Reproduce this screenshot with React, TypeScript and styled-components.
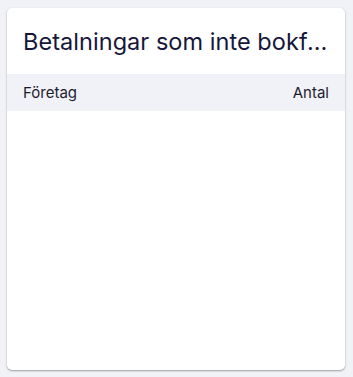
import React from "react";
import styled, { createGlobalStyle } from "styled-components";

const GlobalStyle = createGlobalStyle`
  html, body {
    margin: 0;
    padding: 0;
    background: #f1f2f7;
    font-family: "Inter", "Noto Sans", sans-serif;
  }
`;

const Page = styled.div`
  padding: 8px 8px 7px 7px;
  box-sizing: border-box;
  height: 377px;
  display: flex;
`;

const Card = styled.section`
  flex: 1;
  display: flex;
  flex-direction: column;
  background: #fff;
  border-radius: 5px;
  box-shadow: 0 1px 2px rgba(0, 0, 0, 0.35), 0 0 1px rgba(0, 0, 0, 0.06);
  overflow: hidden;
`;

const Title = styled.h3`
  margin: 0;
  height: 66px;
  box-sizing: border-box;
  padding: 0 16px 0 16px;
  display: flex;
  align-items: center;
  font-size: 23.5px;
  font-weight: 400;
  color: #16163a;
  letter-spacing: 0.05px;

  & > span {
    white-space: nowrap;
    overflow: hidden;
    text-overflow: ellipsis;
  }
`;

const HeadRow = styled.div`
  height: 37px;
  display: flex;
  align-items: center;
  justify-content: space-between;
  padding: 0 16px;
  background: #f1f2f7;
  font-size: 15px;
  color: #1c1c2e;
`;

const Body = styled.div`
  flex: 1;
`;

export default function App() {
  return (
    <>
      <GlobalStyle />
      <Page>
        <Card>
          <Title>
            <span>Betalningar som inte bokförts</span>
          </Title>
          <HeadRow>
            <span>Företag</span>
            <span>Antal</span>
          </HeadRow>
          <Body />
        </Card>
      </Page>
    </>
  );
}
